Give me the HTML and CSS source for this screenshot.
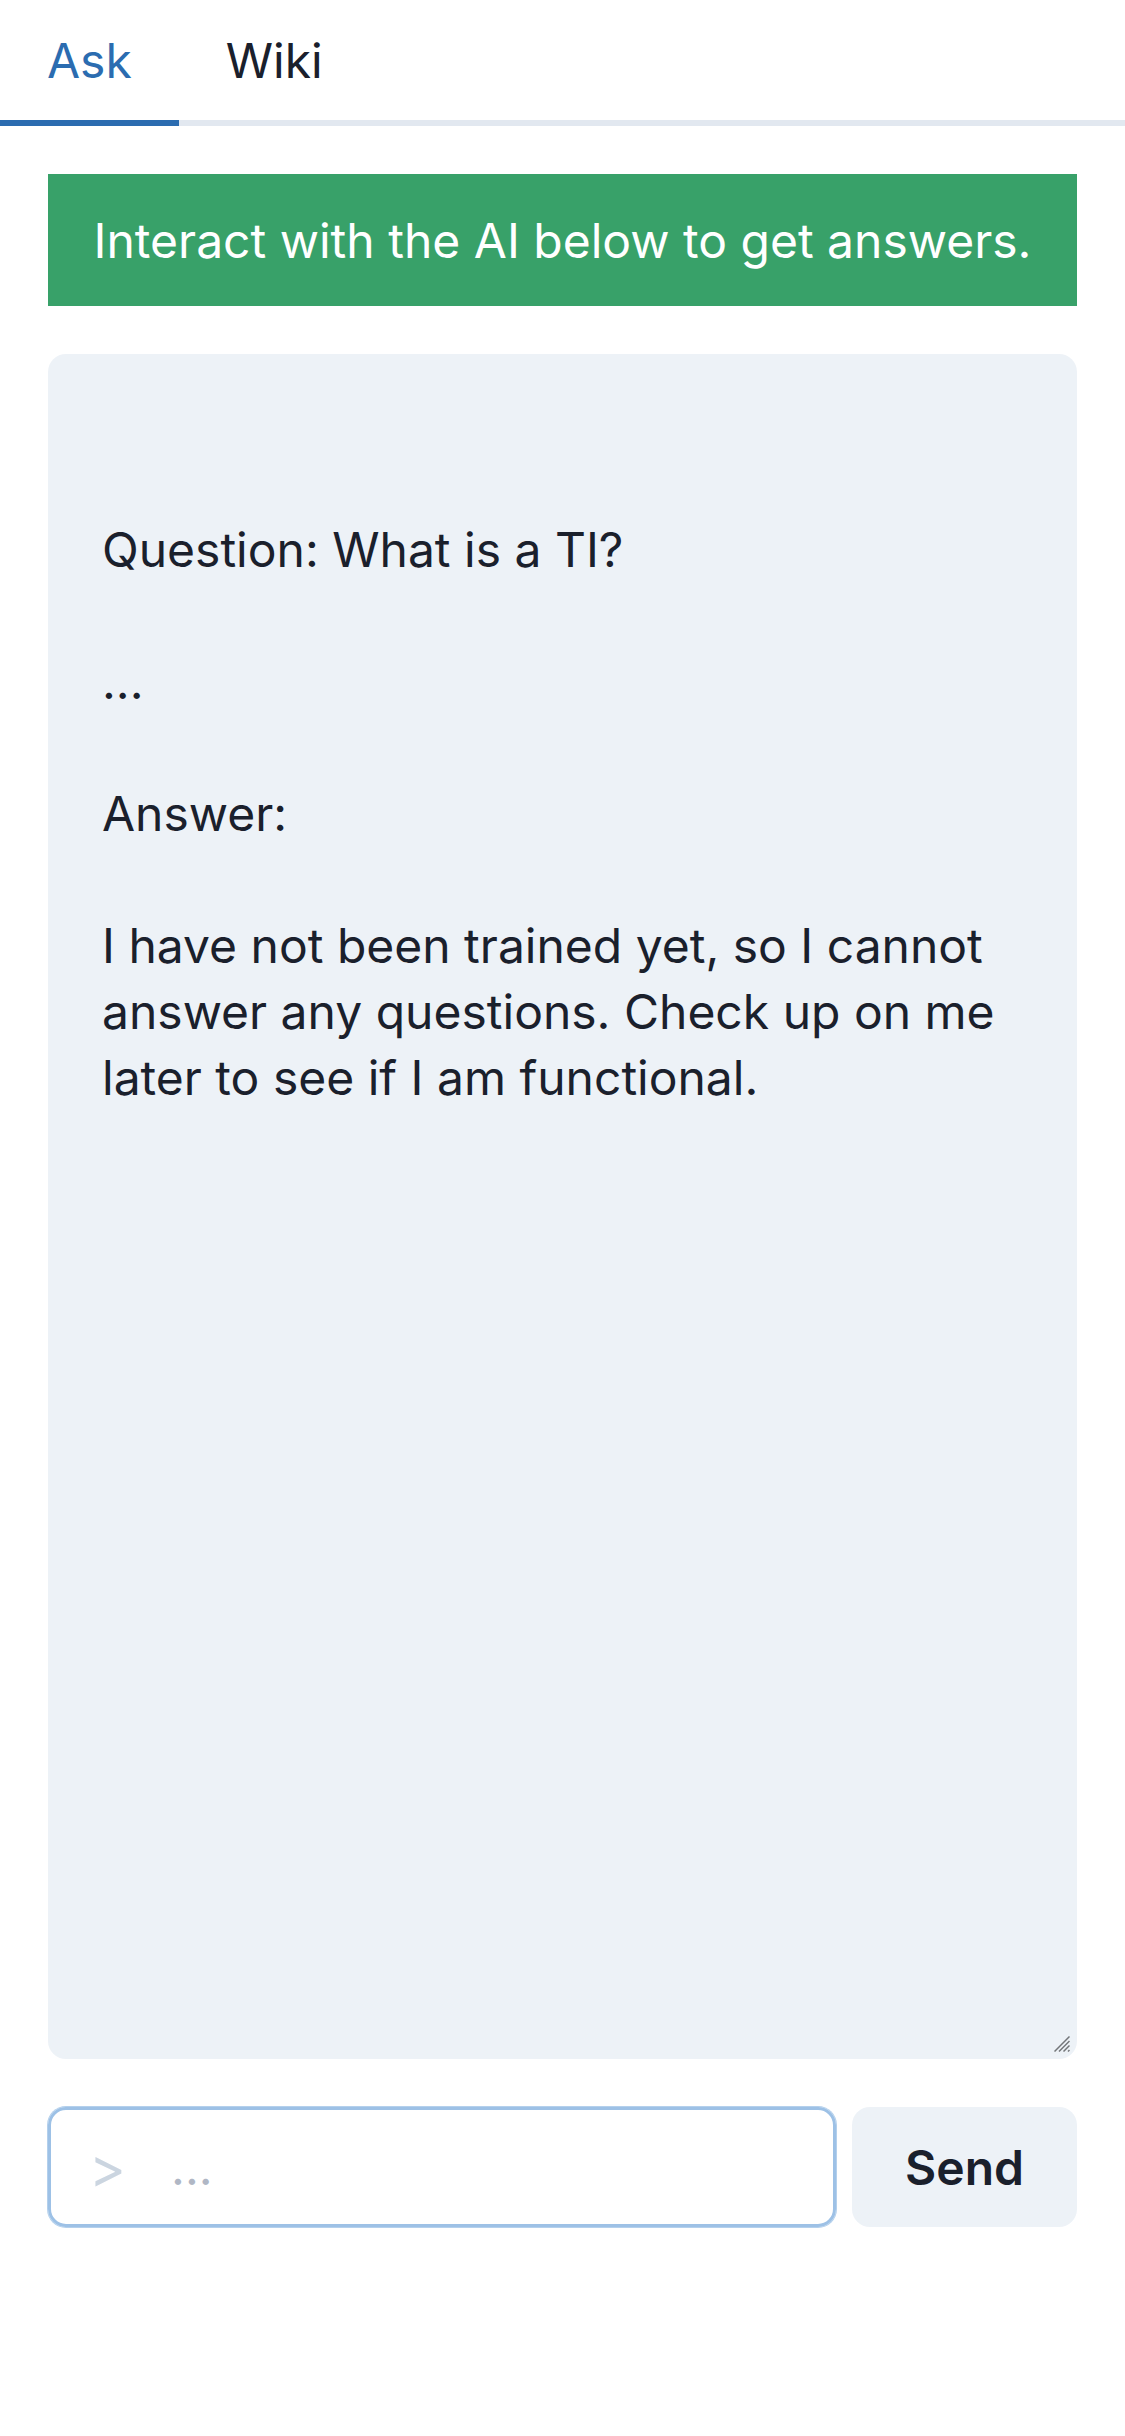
FILE: index.html
```html
<!DOCTYPE html>
<html lang="en">
<head>
<meta charset="utf-8">
<meta name="viewport" content="width=device-width, initial-scale=1">
<title>Ask</title>
<link rel="stylesheet" href="styles.css">
</head>
<body>
<div class="tabs" role="tablist">
  <button class="tab tab-selected" type="button" role="tab" aria-selected="true">Ask</button>
  <button class="tab" type="button" role="tab" aria-selected="false">Wiki</button>
</div>
<main class="panel">
  <p class="banner">Interact with the AI below to get answers.</p>
  <div class="transcript">
    <textarea class="transcript-text" aria-label="Conversation" readonly>


Question: What is a TI?

...

Answer:

I have not been trained yet, so I cannot answer any questions. Check up on me later to see if I am functional.</textarea>
    <svg class="grip" viewBox="0 0 16 16" aria-hidden="true">
      <path d="M0.5 15.5L15.5 0.5M5 15.5L15.5 5M9.5 15.5L15.5 9.5M14 15.5L15.5 14"/>
    </svg>
  </div>
  <form class="composer">
    <label class="field">
      <span class="prompt">&gt;</span>
      <input class="field-input" type="text" placeholder="..." aria-label="Your question">
    </label>
    <button class="send" type="button">Send</button>
  </form>
</main>
</body>
</html>
```
FILE: styles.css
```css
* {
  box-sizing: border-box;
}

body {
  margin: 0;
  background: #fff;
  color: #1a202c;
  font-family: Inter, "Liberation Sans", sans-serif;
  font-size: 48px;
  line-height: 66px;
}

button,
input,
textarea {
  margin: 0;
  border: 0;
  color: inherit;
  font: inherit;
}

.tabs {
  display: flex;
  border-bottom: 6px solid #e2e8f0;
}

.tab {
  margin-bottom: -6px;
  padding: 28px 47px 26px;
  border-bottom: 6px solid transparent;
  background: none;
}

.tab-selected {
  border-color: #2b6cb0;
  color: #2b6cb0;
}

.panel {
  display: flex;
  flex-direction: column;
  gap: 48px;
  padding: 48px;
}

.banner {
  margin: 0;
  padding: 34px 0 32px;
  background: #38a169;
  color: #fff;
  text-align: center;
}

.transcript {
  position: relative;
  display: flex;
}

.transcript-text {
  width: 100%;
  height: 70vh;
  padding: 31px 54px;
  border-radius: 18px;
  background: #edf2f7;
  resize: none;
  outline: none;
}

.grip {
  position: absolute;
  right: 7px;
  bottom: 7px;
  width: 16px;
  height: 16px;
  fill: none;
  stroke: #737679;
  stroke-width: 1.5;
}

.composer {
  display: flex;
  gap: 16px;
}

.field {
  display: flex;
  flex: 1;
  align-items: center;
  gap: 45px;
  min-width: 0;
  height: 120px;
  padding: 2px 38px 0;
  border: 3px solid #9dc1e6;
  border-radius: 18px;
  box-shadow: 0 0 0 1px #b4d0ec;
}

.prompt {
  color: #cbd5e0;
  font-size: 56px;
}

.field-input {
  flex: 1;
  min-width: 0;
  padding: 0;
  background: none;
  outline: none;
}

.field-input::placeholder {
  color: #b0b7c5;
}

.send {
  height: 120px;
  padding: 2px 53px 0;
  border-radius: 18px;
  background: #edf2f7;
  font-weight: 600;
}
```
